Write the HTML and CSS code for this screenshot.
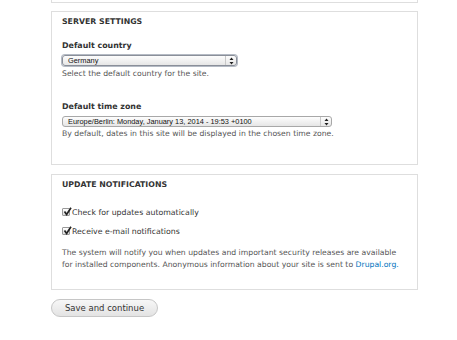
FILE: index.html
```html
<!DOCTYPE html>
<html>
<head>
<meta charset="utf-8">
<link rel="stylesheet" href="styles.css">
</head>
<body>
<div class="page">
  <div class="fieldset fieldset-prev"></div>

  <div class="fieldset fieldset-server">
    <h2 class="legend">SERVER SETTINGS</h2>
    <div class="item">
      <label class="label">Default country</label>
      <div class="select select-country">
        <span class="select-text">Germany</span>
        <span class="select-arrows"><svg width="5" height="8" viewBox="0 0 5 8"><path d="M2.5 0.5 L4.5 3 L0.5 3 Z M2.5 7.5 L4.5 5 L0.5 5 Z" fill="#222"/></svg></span>
      </div>
      <div class="desc">Select the default country for the site.</div>
    </div>
    <div class="item item-tz">
      <label class="label">Default time zone</label>
      <div class="select select-tz">
        <span class="select-text">Europe/Berlin: Monday, January 13, 2014 - 19:53 +0100</span>
        <span class="select-arrows"><svg width="5" height="8" viewBox="0 0 5 8"><path d="M2.5 0.5 L4.5 3 L0.5 3 Z M2.5 7.5 L4.5 5 L0.5 5 Z" fill="#222"/></svg></span>
      </div>
      <div class="desc desc-tz">By default, dates in this site will be displayed in the chosen time zone.</div>
    </div>
  </div>

  <div class="fieldset fieldset-update">
    <h2 class="legend">UPDATE NOTIFICATIONS</h2>
    <div class="check check-first">
      <span class="box"><svg width="9" height="9" viewBox="0 0 9 9"><path d="M1.5 4.5 L3.6 7.4 L8 0.8" fill="none" stroke="#222" stroke-width="1.7"/></svg></span>
      <span>Check for updates automatically</span>
    </div>
    <div class="check check-second">
      <span class="box"><svg width="9" height="9" viewBox="0 0 9 9"><path d="M1.5 4.5 L3.6 7.4 L8 0.8" fill="none" stroke="#222" stroke-width="1.7"/></svg></span>
      <span>Receive e-mail notifications</span>
    </div>
    <div class="desc desc-block">The system will notify you when updates and important security releases are available for installed components. Anonymous information about your site is sent to <a class="link" href="#">Drupal.org.</a></div>
  </div>

  <div class="actions">
    <button class="button">Save and continue</button>
  </div>
</div>
</body>
</html>
```

FILE: styles.css
```css
html, body {
  margin: 0;
  padding: 0;
  background: #fff;
}

body {
  font-family: "DejaVu Sans", sans-serif;
  color: #555;
}

.page {
  width: 367px;
  margin-left: 51px;
  display: flex;
  flex-direction: column;
}

.fieldset {
  border: 1px solid #dedede;
  padding: 5px 10px 0 10px;
  box-sizing: border-box;
}

.fieldset-prev {
  height: 3px;
  border-top: none;
  padding: 0;
}

.fieldset-server {
  height: 154px;
  margin-top: 8px;
}

.fieldset-update {
  height: 116px;
  margin-top: 9px;
}

.legend {
  margin: 0;
  font-size: 7.8px;
  font-weight: bold;
  color: #333;
  line-height: 10px;
}

.item {
  margin-top: 13px;
}

.item-tz {
  margin-top: 21px;
}

.label {
  display: block;
  font-size: 7.9px;
  font-weight: bold;
  color: #333;
  line-height: 11px;
}

.select {
  margin-top: 4px;
  height: 11px;
  border: 1px solid #a8a8a8;
  border-radius: 3px;
  background: linear-gradient(#fdfdfd, #e6e6e6);
  display: flex;
  align-items: center;
  box-sizing: border-box;
}

.select-country {
  width: 175px;
  border-color: #8a8f99;
  box-shadow: 0 0 0 1px #b4bac4;
}

.select-tz {
  width: 270px;
}

.select-text {
  flex: 1;
  font-family: "Liberation Sans", sans-serif;
  font-size: 7.4px;
  color: #111;
  padding-left: 5px;
  white-space: nowrap;
  overflow: hidden;
  line-height: 9px;
}

.select-arrows {
  width: 10px;
  height: 100%;
  border-left: 1px solid #c8c8c8;
  display: flex;
  align-items: center;
  justify-content: center;
}

.desc {
  font-size: 7.7px;
  line-height: 12px;
  margin-top: 2px;
  color: #555;
}

.desc-tz {
  margin-top: 1px;
}

.check {
  display: flex;
  align-items: center;
  gap: 2px;
  font-size: 7.8px;
  color: #333;
  height: 12px;
}

.check-first {
  margin-top: 16px;
}

.check-second {
  margin-top: 7px;
}

.box {
  width: 8px;
  height: 8px;
  border: 1px solid #999;
  border-radius: 1px;
  background: linear-gradient(#fff, #ddd);
  position: relative;
  box-sizing: border-box;
}

.box svg {
  position: absolute;
  left: 0;
  top: -2px;
}

.desc-block {
  margin-top: 10px;
  width: 341px;
}

.link {
  color: #0074bd;
  text-decoration: none;
}

.actions {
  margin-top: 9px;
  display: flex;
}

.button {
  display: block;
  font-family: "DejaVu Sans", sans-serif;
  font-size: 8.5px;
  color: #333;
  height: 18px;
  width: 107px;
  border: 1px solid #c6c6c6;
  border-radius: 9px;
  background: linear-gradient(#f7f7f7, #e3e3e3);
  padding: 0;
}
```
